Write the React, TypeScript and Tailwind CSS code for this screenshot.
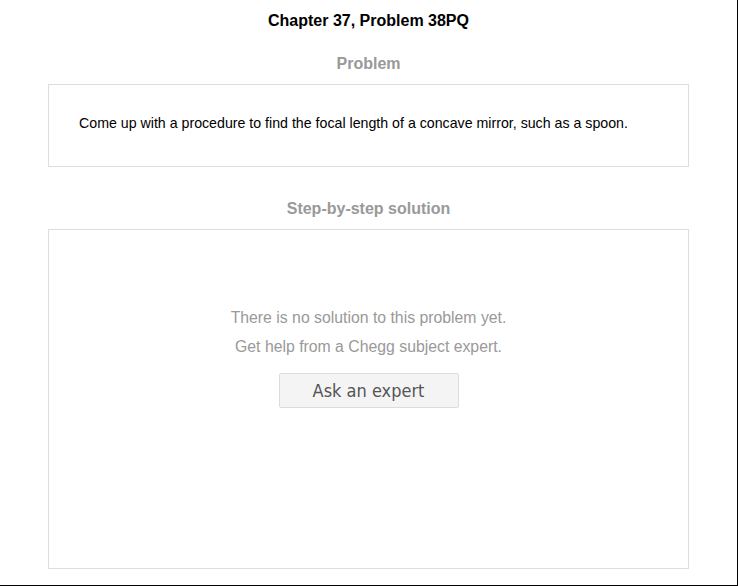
export default function App() {
  return (
    <div
      className="w-[737px] h-[585px] border-r border-b border-black bg-white box-content"
      style={{ fontFamily: '"Liberation Sans", Arial, sans-serif' }}
    >
      <div className="px-12 pt-[12px] flex flex-col">
        <h1 className="text-center text-[16px] leading-[18px] font-bold text-black">
          Chapter 37, Problem 38PQ
        </h1>
        <h2 className="mt-[25px] text-center text-[16px] leading-[18px] font-bold text-[#999999]">
          Problem
        </h2>
        <div className="mt-[11px] h-[83px] border border-[#dddddd] flex items-center px-[30px] pb-[6px]">
          <p className="text-[14.2px] leading-[18px] text-black">
            Come up with a procedure to find the focal length of a concave mirror, such as a spoon.
          </p>
        </div>
        <h2 className="mt-[33px] text-center text-[16px] leading-[18px] font-bold text-[#999999]">
          Step-by-step solution
        </h2>
        <div className="mt-[11px] h-[340px] border border-[#dddddd] flex flex-col items-center pt-[79px]">
          <p className="text-[15.8px] leading-[18px] text-[#999999]">There is no solution to this problem yet.</p>
          <p className="mt-[11px] text-[15.8px] leading-[18px] text-[#999999]">Get help from a Chegg subject expert.</p>
          <button
            className="mt-[17px] w-[180px] h-[35px] bg-[#f4f4f4] border border-[#dcdcdc] rounded-[2px] text-[18px] text-[#555555] leading-none"
            style={{ fontFamily: '"DejaVu Sans Condensed", "DejaVu Sans", Tahoma, sans-serif' }}
          >
            Ask an expert
          </button>
        </div>
      </div>
    </div>
  );
}
